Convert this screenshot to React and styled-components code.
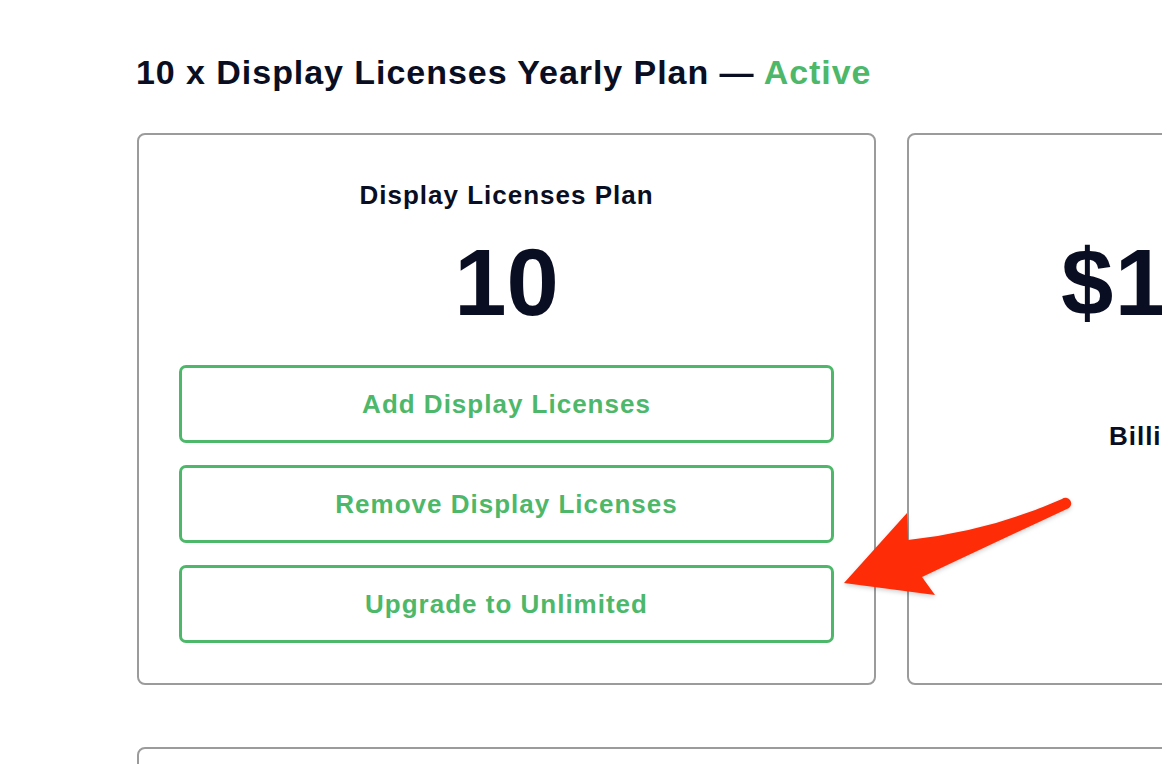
import React from "react";
import styled, { createGlobalStyle } from "styled-components";

const GlobalStyle = createGlobalStyle`
  html, body {
    margin: 0;
    padding: 0;
    background: #ffffff;
  }
  body {
    font-family: "Liberation Sans", Arial, sans-serif;
    color: #0a0e22;
    overflow: hidden;
  }
`;

const Page = styled.div`
  position: relative;
  width: 1162px;
  height: 764px;
  overflow: hidden;
  padding: 53px 0 0 136px;
  box-sizing: border-box;
`;

const Heading = styled.h1`
  margin: 0 0 41px;
  font-size: 34px;
  font-weight: 700;
  letter-spacing: 0.95px;
  line-height: normal;
  white-space: nowrap;
`;

const Status = styled.span`
  color: #4db86a;
`;

const CardRow = styled.div`
  display: flex;
  gap: 31px;
  margin-left: 1px;
`;

const Card = styled.div`
  flex: 0 0 739px;
  height: 552px;
  box-sizing: border-box;
  border: 2px solid #9b9b9b;
  border-radius: 8px;
  padding: 45px 40px 40px;
  display: flex;
  flex-direction: column;
  align-items: stretch;
`;

const CardTitle = styled.div`
  font-size: 26px;
  font-weight: 700;
  letter-spacing: 1px;
  text-align: center;
  line-height: normal;
  white-space: nowrap;
`;

const BigValue = styled.div`
  margin-top: 25px;
  font-size: 94px;
  font-weight: 700;
  letter-spacing: ${(p) => (p.$wide ? "1.4px" : "0")};
  line-height: 1;
  text-align: center;
  white-space: nowrap;
`;

const Detail = styled.div`
  margin-top: 91px;
  font-size: 26px;
  font-weight: 700;
  letter-spacing: 1px;
  text-align: center;
  white-space: nowrap;
`;

const Actions = styled.div`
  margin-top: 35px;
  display: flex;
  flex-direction: column;
  gap: 22px;
`;

const OutlineButton = styled.button`
  height: 78px;
  box-sizing: border-box;
  border: 3px solid #4db86a;
  border-radius: 7px;
  background: transparent;
  color: #4db86a;
  font-family: "Liberation Sans", Arial, sans-serif;
  font-size: 26px;
  font-weight: 700;
  letter-spacing: 1px;
  display: flex;
  align-items: center;
  justify-content: center;
  cursor: pointer;
`;

const LowerCard = styled.div`
  margin-top: 62px;
  margin-left: 1px;
  width: 1100px;
  height: 200px;
  box-sizing: border-box;
  border: 2px solid #9b9b9b;
  border-radius: 8px;
`;

const Callout = styled.svg`
  position: absolute;
  left: 840px;
  top: 495px;
  width: 240px;
  height: 110px;
  overflow: visible;
  filter: drop-shadow(0 2px 2px rgba(0, 0, 0, 0.18));
`;

export default function App() {
  return (
    <>
      <GlobalStyle />
      <Page>
        <Heading>
          10 x Display Licenses Yearly Plan — <Status>Active</Status>
        </Heading>
        <CardRow>
          <Card>
            <CardTitle>Display Licenses Plan</CardTitle>
            <BigValue>10</BigValue>
            <Actions>
              <OutlineButton>Add Display Licenses</OutlineButton>
              <OutlineButton>Remove Display Licenses</OutlineButton>
              <OutlineButton>Upgrade to Unlimited</OutlineButton>
            </Actions>
          </Card>
          <Card>
            <CardTitle>Price</CardTitle>
            <BigValue $wide>$1,200.00</BigValue>
            <Detail>Billing Frequency: Yearly</Detail>
          </Card>
        </CardRow>
        <LowerCard />
        <Callout viewBox="0 0 240 110">
          <path
            d="M4 88 L67 18 L68 45 Q150 36 222 4 A5 5 0 0 1 229 13 Q150 50 82 82 L95 100 Z"
            fill="#fe2c07"
          />
        </Callout>
      </Page>
    </>
  );
}
